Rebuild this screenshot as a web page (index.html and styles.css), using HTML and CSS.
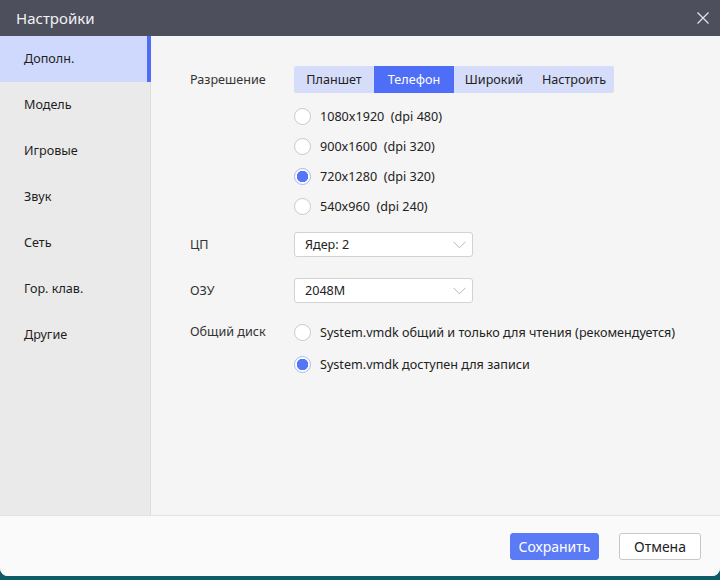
FILE: index.html
```html
<!DOCTYPE html>
<html lang="ru">
<head>
<meta charset="utf-8">
<title>Настройки</title>
<link rel="stylesheet" href="styles.css">
</head>
<body>
<div class="window">
  <div class="titlebar">
    <span class="title">Настройки</span>
    <svg class="close" width="12" height="12" viewBox="0 0 12 12"><path d="M0.5 0.5 L11.5 11.5 M11.5 0.5 L0.5 11.5" stroke="#e6e6ea" stroke-width="1.2" fill="none"/></svg>
  </div>
  <div class="main">
    <nav class="sidebar">
      <div class="nav-item active">Дополн.</div>
      <div class="nav-item">Модель</div>
      <div class="nav-item">Игровые</div>
      <div class="nav-item">Звук</div>
      <div class="nav-item">Сеть</div>
      <div class="nav-item">Гор. клав.</div>
      <div class="nav-item">Другие</div>
    </nav>
    <section class="content">
      <div class="row row-res">
        <div class="label label-tabs">Разрешение</div>
        <div class="field">
          <div class="tabs">
            <div class="tab">Планшет</div>
            <div class="tab active">Телефон</div>
            <div class="tab">Широкий</div>
            <div class="tab">Настроить</div>
          </div>
          <div class="radios">
            <div class="radio-row"><span class="radio"></span><span>1080x1920&nbsp;&nbsp;(dpi 480)</span></div>
            <div class="radio-row"><span class="radio"></span><span>900x1600&nbsp;&nbsp;(dpi 320)</span></div>
            <div class="radio-row"><span class="radio checked"></span><span>720x1280&nbsp;&nbsp;(dpi 320)</span></div>
            <div class="radio-row"><span class="radio"></span><span>540x960&nbsp;&nbsp;(dpi 240)</span></div>
          </div>
        </div>
      </div>
      <div class="row row-cpu">
        <div class="label label-select">ЦП</div>
        <div class="select"><span>Ядер: 2</span><svg width="13" height="8" viewBox="0 0 13 8"><path d="M0.5 0.8 L6.5 6.8 L12.5 0.8" stroke="#b8b8b8" stroke-width="1" fill="none"/></svg></div>
      </div>
      <div class="row row-ram">
        <div class="label label-select">ОЗУ</div>
        <div class="select"><span>2048M</span><svg width="13" height="8" viewBox="0 0 13 8"><path d="M0.5 0.8 L6.5 6.8 L12.5 0.8" stroke="#b8b8b8" stroke-width="1" fill="none"/></svg></div>
      </div>
      <div class="row row-disk">
        <div class="label label-disk">Общий диск</div>
        <div class="radios disk">
          <div class="radio-row tall"><span class="radio"></span><span>System.vmdk общий и только для чтения (рекомендуется)</span></div>
          <div class="radio-row tall"><span class="radio checked"></span><span>System.vmdk доступен для записи</span></div>
        </div>
      </div>
    </section>
  </div>
  <div class="footer">
    <button class="btn primary">Сохранить</button>
    <button class="btn">Отмена</button>
  </div>
</div>
</body>
</html>
```
FILE: styles.css
```css
* { box-sizing: border-box; }
html, body { margin: 0; padding: 0; }
body {
  width: 720px;
  height: 580px;
  overflow: hidden;
  background: #0e5c66;
  font-family: "Noto Sans", "Open Sans", sans-serif;
  font-size: 12.6px;
  color: #222;
}
.window {
  height: 576px;
  display: flex;
  flex-direction: column;
  background: #f5f5f5;
  border-radius: 0 0 8px 8px;
  overflow: hidden;
}
.titlebar {
  height: 36px;
  flex: none;
  background: #4d4f5c;
  display: flex;
  align-items: center;
  justify-content: space-between;
  padding: 0 11px 0 16px;
}
.title { color: #f2f2f4; font-size: 15px; }
.close { display: block; }
.main { flex: 1; display: flex; min-height: 0; }
.sidebar {
  width: 151px;
  flex: none;
  background: #eaeaea;
  border-right: 1px solid #dcdcdc;
}
.nav-item {
  height: 46px;
  line-height: 46px;
  padding-left: 24px;
  color: #1e1e1e;
}
.nav-item.active {
  background: #cfd9fd;
  box-shadow: inset -4px 0 0 #4f6ef7;
  margin-right: -1px;
}
.content { flex: 1; padding: 30px 0 0 39px; }
.row { display: flex; }
.label { width: 104px; flex: none; color: #333; }
.label-tabs { line-height: 27px; }
.label-select { line-height: 25px; }
.label-disk { line-height: 32px; }
.tabs {
  display: flex;
  width: 320px;
  background: #d6ddfa;
  border-radius: 2px;
}
.tab {
  width: 80px;
  height: 27px;
  line-height: 27px;
  text-align: center;
  color: #222;
}
.tab.active { background: #4f6ef7; color: #fff; }
.radios { margin-top: 8px; }
.radio-row {
  height: 30px;
  display: flex;
  align-items: center;
  gap: 9px;
}
.radio-row.tall { height: 32px; }
.radios.disk { margin-top: 0; }
.radio {
  width: 17px;
  height: 17px;
  border-radius: 50%;
  border: 1px solid #c9c9c9;
  background: #fff;
  flex: none;
}
.radio.checked {
  border-color: #a9b8f8;
  background: radial-gradient(circle, #5576f6 0 5.5px, #fff 6px);
}
.row-cpu { margin-top: 11px; }
.row-ram { margin-top: 21px; }
.row-disk { margin-top: 13px; }
.select {
  width: 179px;
  height: 25px;
  border: 1px solid #d2d2d2;
  border-radius: 3px;
  background: #fff;
  display: flex;
  align-items: center;
  justify-content: space-between;
  padding: 0 6px 0 10px;
}
.select svg { display: block; }
.footer {
  height: 61px;
  flex: none;
  background: #fafafa;
  border-top: 1px solid #e2e2e2;
  display: flex;
  align-items: center;
  justify-content: flex-end;
  gap: 20px;
  padding: 0 19px 0 0;
}
.btn {
  height: 27px;
  font-family: inherit;
  font-size: 14px;
  border-radius: 3px;
  border: 1px solid #c8c8c8;
  background: #fff;
  color: #222;
  padding: 0;
  width: 82px;
}
.btn.primary {
  width: 89px;
  background: #5a7af6;
  border-color: #5a7af6;
  color: #fff;
}
```
